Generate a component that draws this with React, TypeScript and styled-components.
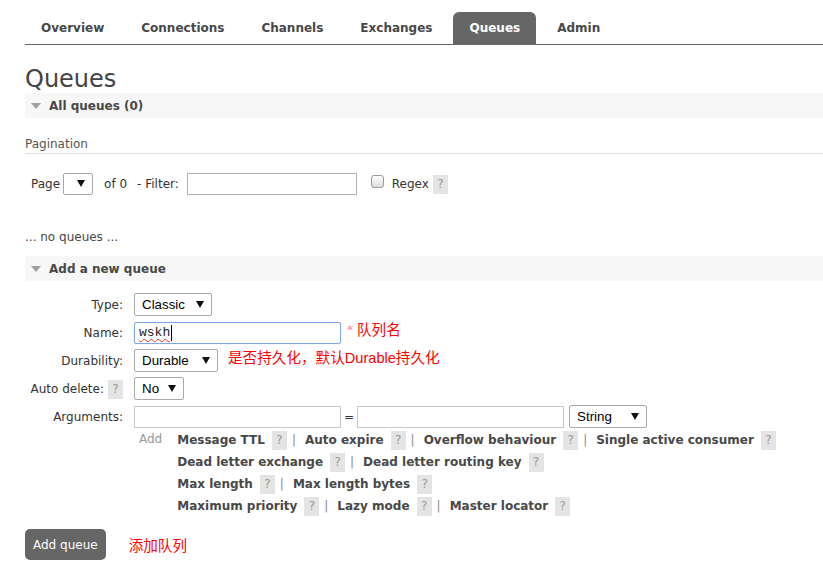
import React from "react";
import styled, { createGlobalStyle } from "styled-components";

const Global = createGlobalStyle`
  html, body { margin: 0; padding: 0; background: #fff; }
  body {
    font-family: "DejaVu Sans", Verdana, sans-serif;
    font-size: 12px;
    color: #484848;
  }
  * { box-sizing: border-box; }
`;

const Page = styled.div`
  padding: 12px 0 0 25px;
  width: 823px;
  height: 573px;
  overflow: hidden;
`;

const Tabs = styled.ul`
  display: flex;
  gap: 5px;
  list-style: none;
  margin: 0;
  padding: 0;
  border-bottom: 1px solid #666;
`;

const Tab = styled.li<{ $active?: boolean }>`
  height: 32px;
  line-height: 33px;
  padding: 0 16px;
  font-weight: bold;
  font-size: 12px;
  color: ${(p) => (p.$active ? "#fff" : "#484848")};
  background: ${(p) => (p.$active ? "#666" : "transparent")};
  border-radius: 6px 6px 0 0;
`;

const Title = styled.h1`
  margin: 21px 0 0;
  font-size: 24px;
  line-height: 27px;
  font-weight: normal;
  color: #444;
`;

const SectionBar = styled.div`
  display: flex;
  align-items: center;
  gap: 8px;
  height: 25px;
  padding-left: 6px;
  background: #f7f7f7;
  font-weight: bold;
  color: #484848;
`;

const Triangle = styled.span`
  width: 0;
  height: 0;
  border-left: 5.5px solid transparent;
  border-right: 5.5px solid transparent;
  border-top: 6px solid #a0a0a0;
`;

const SubHeading = styled.h3`
  margin: 19px 0 0;
  padding-bottom: 2px;
  font-size: 12px;
  line-height: 14px;
  font-weight: normal;
  color: #555;
  border-bottom: 1px solid #ddd;
`;

const PagerRow = styled.div`
  display: flex;
  align-items: center;
  margin: 19px 0 0 6px;
  color: #333;
  height: 22px;
`;

const Gap = styled.span<{ $w: number }>`
  display: inline-block;
  width: ${(p) => p.$w}px;
`;

const SelectWrap = styled.span<{ $w: number; $h?: number }>`
  position: relative;
  display: inline-flex;
  width: ${(p) => p.$w}px;
  height: ${(p) => p.$h ?? 23}px;
`;

const NativeSelect = styled.select`
  appearance: none;
  width: 100%;
  height: 100%;
  margin: 0;
  padding: 0 18px 0 7px;
  border: 1px solid #a9a9a9;
  border-radius: 2px;
  background: #fff;
  font-family: "Liberation Sans", Arial, sans-serif;
  font-size: 13.33px;
  color: #000;
  outline: none;
`;

const Arrow = styled.span`
  position: absolute;
  right: 8px;
  top: 50%;
  margin-top: -4px;
  width: 0;
  height: 0;
  border-left: 4px solid transparent;
  border-right: 4px solid transparent;
  border-top: 7px solid #111;
  pointer-events: none;
`;

const TextInput = styled.input<{ $w: number; $border?: string }>`
  width: ${(p) => p.$w}px;
  height: 22px;
  margin: 0;
  padding: 0 4px;
  border: 1px solid ${(p) => p.$border ?? "#c8c8c8"};
  border-radius: 0;
  background: #fff;
  font-family: "Liberation Sans", Arial, sans-serif;
  font-size: 13px;
  outline: none;
`;

const Checkbox = styled.input`
  appearance: none;
  width: 13px;
  height: 13px;
  margin: 0;
  border: 1px solid #9a9a9a;
  border-radius: 3px;
  background: linear-gradient(#fdfdfd, #dcdcdc);
  transform: translateY(-3px);
`;

const Help = styled.span`
  display: inline-flex;
  align-items: center;
  justify-content: center;
  width: 15px;
  height: 19px;
  background: #e4e4e4;
  color: #999;
  font-weight: normal;
  font-size: 12px;
  flex: none;
`;

const Empty = styled.p`
  margin: 35px 0 12px;
  line-height: 14px;
  color: #484848;
`;

const Form = styled.div`
  display: grid;
  grid-template-columns: 98px auto;
  column-gap: 11px;
  row-gap: 5px;
  align-items: center;
  margin-top: 12px;
`;

const Label = styled.label`
  display: flex;
  justify-content: flex-end;
  align-items: center;
  gap: 4px;
  color: #333;
  min-height: 23px;
  padding-top: 1px;
`;

const Field = styled.div`
  display: flex;
  align-items: center;
  min-height: 23px;
`;

const NameBox = styled.div`
  width: 207px;
  height: 22px;
  display: flex;
  align-items: center;
  padding: 0 4px;
  border: 1px solid #7ea6e6;
  border-radius: 2px;
  box-shadow: 0 0 1px #a9c6f2;
  font-family: "Liberation Mono", "Courier New", monospace;
  font-size: 13px;
  color: #222;
`;

const Misspelled = styled.span`
  text-decoration: underline wavy #e33;
  text-decoration-thickness: 1px;
  text-underline-offset: 2px;
`;

const Caret = styled.span`
  display: inline-block;
  width: 1px;
  height: 16px;
  margin-left: 1px;
  background: #000;
`;

const Note = styled.span<{ $ml: number; $up?: number }>`
  margin-left: ${(p) => p.$ml}px;
  transform: translateY(${(p) => -(p.$up ?? 0)}px);
  color: #ff0000;
  font-family: "Liberation Sans", "Noto Sans CJK SC", sans-serif;
  font-size: 14.6px;
`;

const Star = styled.span`
  margin-left: 6px;
  transform: translateY(-3px);
  color: #f88;
  font-size: 12px;
`;

const Equals = styled.span`
  margin: 0 3px;
  color: #333;
`;

const ArgsCell = styled.div`
  grid-column: 2;
  display: flex;
  align-items: flex-start;
  margin-top: -4px;
`;

const AddLabel = styled.span`
  margin: 3px 15px 0 5px;
  color: #999;
  line-height: 14px;
`;

const LinkLines = styled.div`
  display: flex;
  flex-direction: column;
`;

const LinkLine = styled.div`
  display: flex;
  align-items: center;
  height: 22px;
`;

const LinkText = styled.span`
  font-weight: bold;
  color: #484848;
  margin-right: 7px;
`;

const Sep = styled.span`
  margin: 0 9px 0 5px;
  color: #888;
`;

const Footer = styled.div`
  display: flex;
  align-items: center;
  margin-top: 12px;
`;

const Button = styled.button`
  height: 31px;
  padding: 0 8px;
  border: none;
  border-radius: 5px;
  background: #666;
  color: #fff;
  font-family: "DejaVu Sans", Verdana, sans-serif;
  font-size: 12px;
`;

type SelProps = { w: number; h?: number; value?: string; options?: string[] };
const Select = ({ w, h, value = "", options = [] }: SelProps) => (
  <SelectWrap $w={w} $h={h}>
    <NativeSelect defaultValue={value}>
      {options.length === 0 ? <option value="" /> : options.map((o) => <option key={o}>{o}</option>)}
    </NativeSelect>
    <Arrow />
  </SelectWrap>
);

const linkRows: string[][] = [
  ["Message TTL", "Auto expire", "Overflow behaviour", "Single active consumer"],
  ["Dead letter exchange", "Dead letter routing key"],
  ["Max length", "Max length bytes"],
  ["Maximum priority", "Lazy mode", "Master locator"],
];

export default function App() {
  return (
    <Page>
      <Global />
      <Tabs>
        {["Overview", "Connections", "Channels", "Exchanges", "Queues", "Admin"].map((t) => (
          <Tab key={t} $active={t === "Queues"}>
            {t}
          </Tab>
        ))}
      </Tabs>
      <Title>Queues</Title>
      <SectionBar>
        <Triangle />
        All queues (0)
      </SectionBar>
      <SubHeading>Pagination</SubHeading>
      <PagerRow>
        Page
        <Gap $w={3} />
        <Select w={30} h={22} />
        <Gap $w={11} />
        of 0
        <Gap $w={10} />
        - Filter:
        <Gap $w={8} />
        <TextInput $w={170} $border="#b0b0b0" />
        <Gap $w={14} />
        <Checkbox type="checkbox" />
        <Gap $w={8} />
        Regex
        <Gap $w={4} />
        <Help>?</Help>
      </PagerRow>
      <Empty>... no queues ...</Empty>
      <SectionBar>
        <Triangle />
        Add a new queue
      </SectionBar>
      <Form>
        <Label>Type:</Label>
        <Field>
          <Select w={78} value="Classic" options={["Classic", "Quorum"]} />
        </Field>
        <Label>Name:</Label>
        <Field>
          <NameBox>
            <Misspelled>wskh</Misspelled>
            <Caret />
          </NameBox>
          <Star>*</Star>
          <Note $ml={4} $up={4}>队列名</Note>
        </Field>
        <Label>Durability:</Label>
        <Field>
          <Select w={84} value="Durable" options={["Durable", "Transient"]} />
          <Note $ml={10} $up={4}>是否持久化，默认Durable持久化</Note>
        </Field>
        <Label>
          Auto delete:
          <Help>?</Help>
        </Label>
        <Field>
          <Select w={50} value="No" options={["No", "Yes"]} />
        </Field>
        <Label>Arguments:</Label>
        <Field>
          <TextInput $w={207} />
          <Equals>=</Equals>
          <TextInput $w={207} />
          <Gap $w={5} />
          <Select w={78} value="String" options={["String", "Number", "Boolean", "List"]} />
        </Field>
        <ArgsCell>
          <AddLabel>Add</AddLabel>
          <LinkLines>
            {linkRows.map((row, i) => (
              <LinkLine key={i}>
                {row.map((l, j) => (
                  <React.Fragment key={l}>
                    <LinkText>{l}</LinkText>
                    <Help>?</Help>
                    {j < row.length - 1 && <Sep>|</Sep>}
                  </React.Fragment>
                ))}
              </LinkLine>
            ))}
          </LinkLines>
        </ArgsCell>
      </Form>
      <Footer>
        <Button>Add queue</Button>
        <Note $ml={23}>添加队列</Note>
      </Footer>
    </Page>
  );
}
